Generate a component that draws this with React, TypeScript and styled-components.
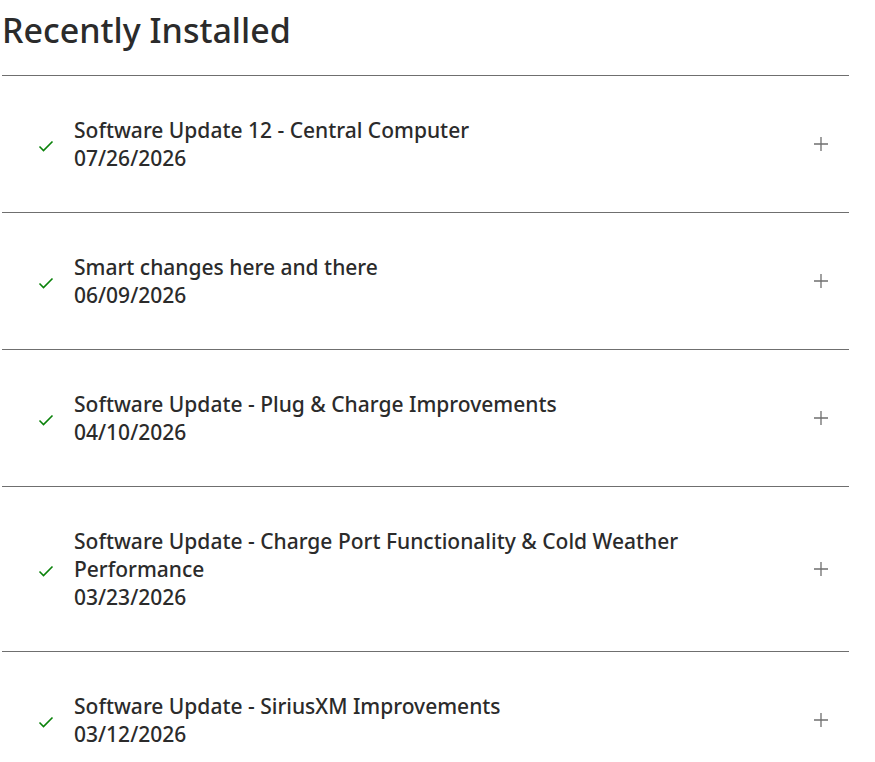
import React from "react";
import styled, { createGlobalStyle } from "styled-components";

const GlobalStyle = createGlobalStyle`
  html, body {
    margin: 0;
    padding: 0;
    background: #ffffff;
  }
  body {
    font-family: "Noto Sans", "Open Sans", sans-serif;
    color: #2b2b2b;
  }
`;

const Page = styled.div`
  width: 847px;
  padding: 6px 0 0 2px;
`;

const Title = styled.h2`
  margin: 0;
  font-size: 34px;
  font-weight: 500;
  line-height: 48px;
  padding-bottom: 21px;
  border-bottom: 1px solid #6f6f6f;
`;

const List = styled.ul`
  list-style: none;
  margin: 0;
  padding: 0;
`;

const Row = styled.li`
  display: flex;
  align-items: center;
  padding: 40px 20px 40px 36px;
  border-bottom: 1px solid #6f6f6f;
`;

const Check = styled.span`
  display: flex;
  width: 16px;
  height: 16px;
  margin-right: 20px;
  margin-top: 4px;
  color: #0a820a;
`;

const Info = styled.div`
  flex: 1;
  font-size: 21px;
  font-weight: 500;
  line-height: 28px;
  max-width: 640px;
`;

const Name = styled.div``;
const Date = styled.div``;

const Toggle = styled.button`
  display: flex;
  align-items: center;
  justify-content: center;
  width: 16px;
  height: 16px;
  padding: 0;
  margin-left: auto;
  border: none;
  background: none;
  color: #6f6f6f;
  cursor: pointer;
`;

const updates = [
  { name: "Software Update 12 - Central Computer", date: "07/26/2026" },
  { name: "Smart changes here and there", date: "06/09/2026" },
  { name: "Software Update - Plug & Charge Improvements", date: "04/10/2026" },
  {
    name: "Software Update - Charge Port Functionality & Cold Weather Performance",
    date: "03/23/2026",
  },
  { name: "Software Update - SiriusXM Improvements", date: "03/12/2026" },
];

const CheckIcon = () => (
  <svg width="16" height="16" viewBox="0 0 16 16" fill="none">
    <path d="M1.5 8.5 L5.5 12.5 L14.5 3.5" stroke="currentColor" strokeWidth="1.6" />
  </svg>
);

const PlusIcon = () => (
  <svg width="14" height="14" viewBox="0 0 14 14" fill="none">
    <path d="M7 0 V14 M0 7 H14" stroke="currentColor" strokeWidth="1.3" />
  </svg>
);

export default function App() {
  return (
    <>
      <GlobalStyle />
      <Page>
        <Title>Recently Installed</Title>
        <List>
          {updates.map((u) => (
            <Row key={u.date}>
              <Check>
                <CheckIcon />
              </Check>
              <Info>
                <Name>{u.name}</Name>
                <Date>{u.date}</Date>
              </Info>
              <Toggle aria-label="Expand">
                <PlusIcon />
              </Toggle>
            </Row>
          ))}
        </List>
      </Page>
    </>
  );
}
